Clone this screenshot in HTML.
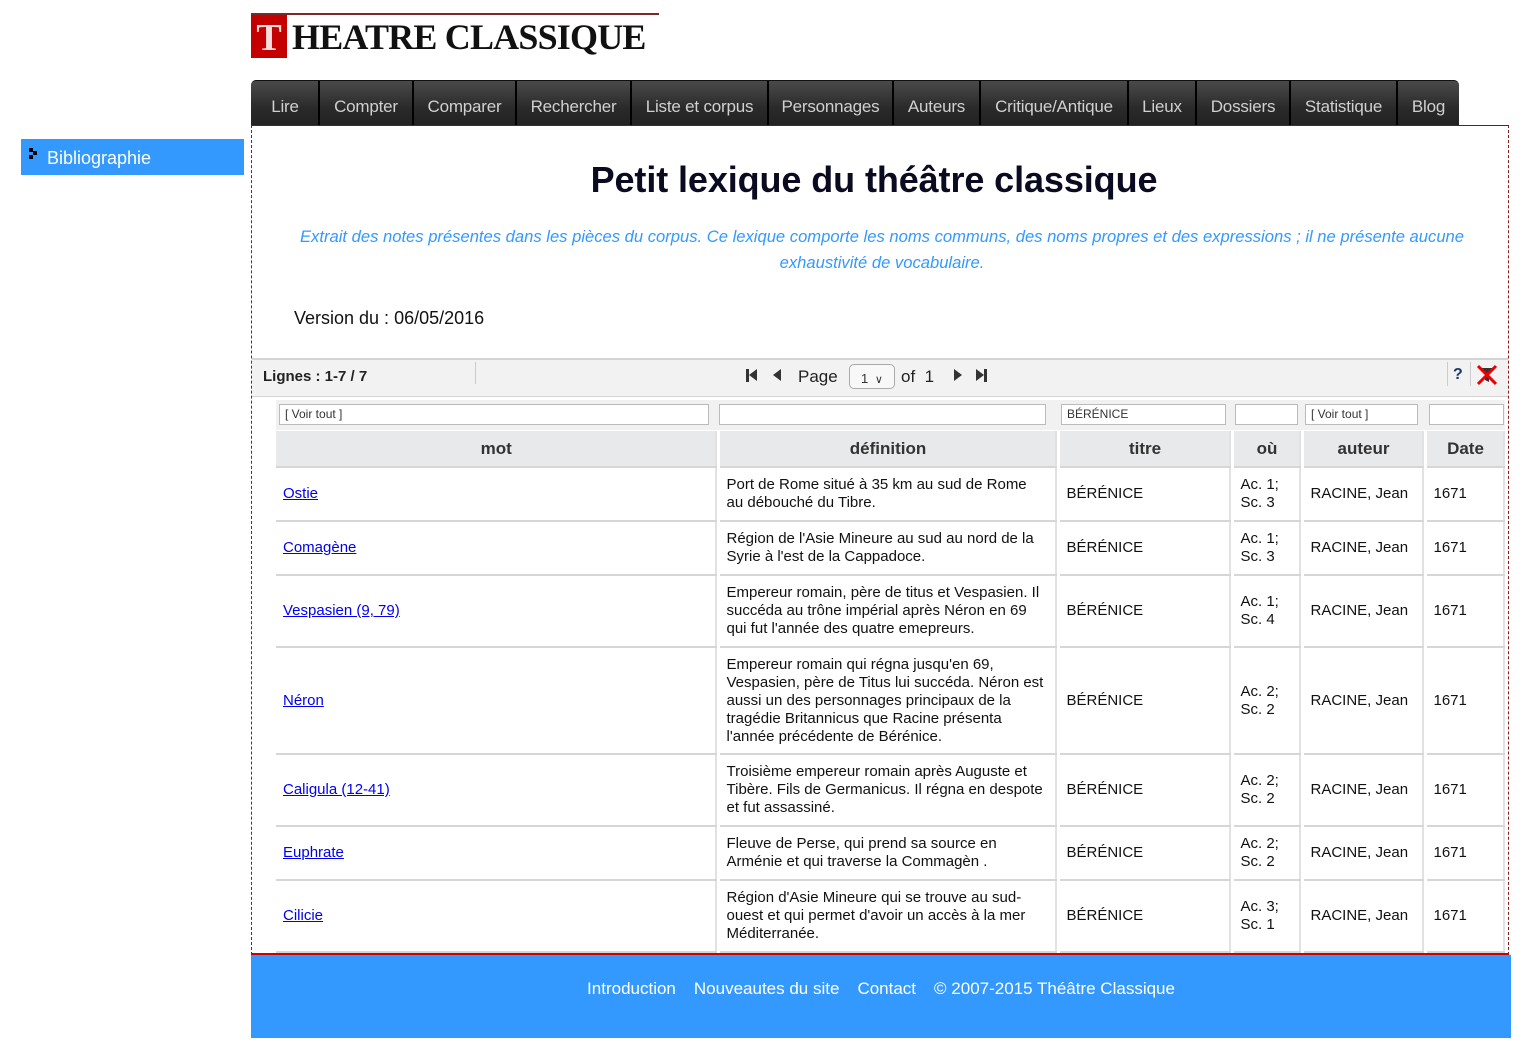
<!DOCTYPE html>
<html><head><meta charset="utf-8">
<style>
*{box-sizing:border-box;margin:0;padding:0}
body{width:1535px;height:1061px;background:#fff;font-family:"Liberation Sans",sans-serif;position:relative;overflow:hidden}
.abs{position:absolute}
#logo{left:251px;top:13px;width:408px;height:45px;border-top:2px solid #7a2a2a}
#logo .t{position:absolute;left:0;top:0;width:36px;height:43px;background:#c40000;color:#f4dede;font:bold 38px "Liberation Serif",serif;text-align:center;line-height:46px}
#logo .r{position:absolute;left:41px;top:0;font:bold 36px "Liberation Serif",serif;color:#111;line-height:44px;letter-spacing:-0.8px}
#nav{left:251px;top:80px;width:1208px;height:46px;background:linear-gradient(#4a4a4a,#2a2a2a 60%,#222);border-radius:5px 5px 0 0;border-top:1px solid #111}
#nav div{position:absolute;top:0;height:45px;line-height:52px;color:#d0d0d0;font-size:17px;text-align:center;border-left:2px solid #000;letter-spacing:-0.2px}
#side{left:21px;top:139px;width:223px;height:36px;background:#3399ff;color:#fff;font-size:18px;line-height:38px;padding-left:26px}
#side i{position:absolute;display:block;left:8px;top:9px;width:9px;height:11px;line-height:0}
#box{left:251px;top:125px;width:1258px;height:830px;border:1px dashed #8b1a1a;border-top:1px solid #a00;border-bottom:2px solid #c00}
h1{position:absolute;left:0;width:1244px;top:33px;text-align:center;font-size:36px;color:#0a0a20;font-weight:bold;letter-spacing:-0.1px}
.intro{position:absolute;left:30px;width:1200px;top:98px;text-align:center;font-style:italic;color:#3399ff;font-size:16.6px;line-height:26px}
.ver{position:absolute;left:42px;top:182px;font-size:18px;color:#111}
#bar{left:252px;top:358px;width:1256px;height:39px;background:#f2f2f2;border-top:2px solid #d4d4d4;border-bottom:1px solid #d4d4d4;font-size:15px}
#filt{left:276px;top:400px;width:1229px;height:30px;background:#f1f1f1}
.in{position:absolute;top:4px;height:21px;background:#fff;border:1px solid #bbb;font-size:12px;color:#333;line-height:19px;padding-left:5px}
table{position:absolute;left:276px;top:431px;border-collapse:collapse;table-layout:fixed;font-size:15px;color:#111}
td,th{border-right:3px solid #fff;border-bottom:2px solid #d6d6d6;padding:0 10px 0 7px;vertical-align:middle;line-height:18px;box-shadow:inset -2px 0 0 #e2e2e2}
th{background:#e8e9eb;font-size:17px;color:#333;height:36px;text-align:center;padding:0}
td a{color:#00e;text-decoration:underline}
#foot{left:251px;top:955px;width:1260px;height:83px;background:#3399ff;color:#fff;font-size:17px;text-align:center;padding-top:24px}
#foot span{margin:0 9px}
.tri{position:absolute;width:0;height:0;border-top:6px solid transparent;border-bottom:6px solid transparent}
</style></head><body>
<div id="logo" class="abs"><div class="t">T</div><div class="r">HEATRE CLASSIQUE</div></div>
<div id="nav" class="abs">
<div style="left:0;width:68px;border-left:none">Lire</div>
<div style="left:67px;width:94px">Compter</div>
<div style="left:161px;width:103px">Comparer</div>
<div style="left:264px;width:115px">Rechercher</div>
<div style="left:379px;width:137px">Liste et corpus</div>
<div style="left:516px;width:125px">Personnages</div>
<div style="left:641px;width:87px">Auteurs</div>
<div style="left:728px;width:148px">Critique/Antique</div>
<div style="left:876px;width:68px">Lieux</div>
<div style="left:944px;width:94px">Dossiers</div>
<div style="left:1038px;width:107px">Statistique</div>
<div style="left:1145px;width:63px">Blog</div>
</div>
<div id="side" class="abs"><i><svg width="9" height="11"><rect x="0" y="0" width="4" height="4" fill="#000"/><rect x="4" y="3" width="4" height="4" fill="#000"/><rect x="0" y="7" width="4" height="4" fill="#000"/></svg></i>Bibliographie</div>
<div id="box" class="abs">
<h1>Petit lexique du théâtre classique</h1>
<div class="intro">Extrait des notes présentes dans les pièces du corpus. Ce lexique comporte les noms communs, des noms propres et des expressions ; il ne présente aucune exhaustivité de vocabulaire.</div>
<div class="ver">Version du : 06/05/2016</div>
</div>
<div id="bar" class="abs">
<div class="abs" style="left:11px;top:8px;font-weight:bold;color:#222">Lignes : 1-7 / 7</div>
<div class="abs" style="left:223px;top:2px;width:1px;height:22px;background:#ccc"></div>
<div class="abs" style="left:494px;top:9px;width:3px;height:13px;background:#333"></div>
<div class="tri" style="left:497px;top:9px;border-right:8px solid #333"></div>
<div class="tri" style="left:521px;top:9px;border-right:8px solid #333"></div>
<div class="abs" style="left:546px;top:7px;font-size:17px;color:#222">Page</div>
<div class="abs" style="left:597px;top:4px;width:46px;height:25px;border:1px solid #aaa;border-radius:5px;background:#f8f8f8;font-size:13px;padding:6px 0 0 11px;color:#333">1 <span style="font-size:11px;margin-left:3px">&#8744;</span></div>
<div class="abs" style="left:649px;top:7px;font-size:17px;color:#222">of &nbsp;1</div>
<div class="tri" style="left:702px;top:9px;border-left:8px solid #333"></div>
<div class="tri" style="left:724px;top:9px;border-left:8px solid #333"></div>
<div class="abs" style="left:732px;top:9px;width:3px;height:13px;background:#333"></div>
<div class="abs" style="left:1195px;top:2px;width:1px;height:24px;background:#ccc"></div>
<div class="abs" style="left:1201px;top:6px;font-weight:bold;color:#1a3a6a;font-size:16px">?</div>
<div class="abs" style="left:1218px;top:2px;width:1px;height:24px;background:#ccc"></div>
<svg class="abs" style="left:1224px;top:4px" width="22" height="22"><path d="M3 4h16l-6 7v7l-4-2v-5z" fill="#333"/><path d="M2 2L20 20M20 2L2 20" stroke="#e00" stroke-width="3"/></svg>
</div>
<div id="filt" class="abs">
<div class="in" style="left:3px;width:430px">[ Voir tout ]</div>
<div class="in" style="left:443px;width:327px"></div>
<div class="in" style="left:785px;width:165px">BÉRÉNICE</div>
<div class="in" style="left:959px;width:63px"></div>
<div class="in" style="left:1029px;width:113px">[ Voir tout ]</div>
<div class="in" style="left:1153px;width:75px"></div>
</div>
<table>
<colgroup><col style="width:442px"><col style="width:340px"><col style="width:174px"><col style="width:70px"><col style="width:123px"><col style="width:81px"></colgroup>
<tr><th>mot</th><th>définition</th><th>titre</th><th>où</th><th>auteur</th><th>Date</th></tr>
<tr style="height:54px"><td><a>Ostie</a></td><td>Port de Rome situé à 35 km au sud de Rome au débouché du Tibre.</td><td>BÉRÉNICE</td><td>Ac. 1; Sc. 3</td><td>RACINE, Jean</td><td>1671</td></tr>
<tr style="height:54px"><td><a>Comagène</a></td><td>Région de l'Asie Mineure au sud au nord de la Syrie à l'est de la Cappadoce.</td><td>BÉRÉNICE</td><td>Ac. 1; Sc. 3</td><td>RACINE, Jean</td><td>1671</td></tr>
<tr style="height:72px"><td><a>Vespasien (9, 79)</a></td><td>Empereur romain, père de titus et Vespasien. Il succéda au trône impérial après Néron en 69 qui fut l'année des quatre emepreurs.</td><td>BÉRÉNICE</td><td>Ac. 1; Sc. 4</td><td>RACINE, Jean</td><td>1671</td></tr>
<tr style="height:107px"><td><a>Néron</a></td><td>Empereur romain qui régna jusqu'en 69, Vespasien, père de Titus lui succéda. Néron est aussi un des personnages principaux de la tragédie Britannicus que Racine présenta l'année précédente de Bérénice.</td><td>BÉRÉNICE</td><td>Ac. 2; Sc. 2</td><td>RACINE, Jean</td><td>1671</td></tr>
<tr style="height:72px"><td><a>Caligula (12-41)</a></td><td>Troisième empereur romain après Auguste et Tibère. Fils de Germanicus. Il régna en despote et fut assassiné.</td><td>BÉRÉNICE</td><td>Ac. 2; Sc. 2</td><td>RACINE, Jean</td><td>1671</td></tr>
<tr style="height:54px"><td><a>Euphrate</a></td><td>Fleuve de Perse, qui prend sa source en Arménie et qui traverse la Commagèn .</td><td>BÉRÉNICE</td><td>Ac. 2; Sc. 2</td><td>RACINE, Jean</td><td>1671</td></tr>
<tr style="height:72px"><td><a>Cilicie</a></td><td>Région d'Asie Mineure qui se trouve au sud-ouest et qui permet d'avoir un accès à la mer Méditerranée.</td><td>BÉRÉNICE</td><td>Ac. 3; Sc. 1</td><td>RACINE, Jean</td><td>1671</td></tr>
</table>
<div id="foot" class="abs"><span>Introduction</span><span>Nouveautes du site</span><span>Contact</span><span>© 2007-2015 Théâtre Classique</span></div>
</body></html>
